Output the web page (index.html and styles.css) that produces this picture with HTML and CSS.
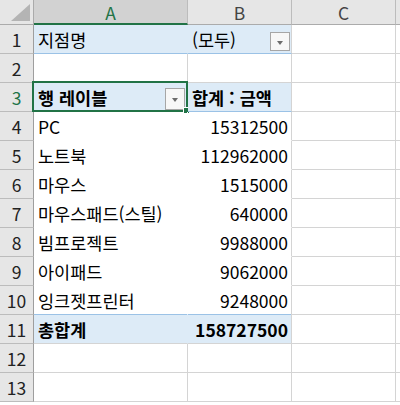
FILE: index.html
```html
<!DOCTYPE html>
<html lang="ko">
<head>
<meta charset="utf-8">
<link rel="stylesheet" href="styles.css">
</head>
<body>
<div class="sheet">
  <div class="hdr corner"><span class="tri"></span></div>
  <div class="hdr col sel">A</div>
  <div class="hdr col">B</div>
  <div class="hdr col">C</div>
  <div class="hdr col last"></div>

  <div class="hdr row">1</div>
  <div class="cell piv filter">지점명</div>
  <div class="cell piv filter b">(모두)<span class="dd"></span></div>
  <div class="cell"></div>
  <div class="cell"></div>

  <div class="hdr row">2</div>
  <div class="cell"></div>
  <div class="cell"></div>
  <div class="cell"></div>
  <div class="cell"></div>

  <div class="hdr row rsel">3</div>
  <div class="cell piv head bold active">행 레이블<span class="dd"></span><span class="frame"><span class="handle"></span></span></div>
  <div class="cell piv head bold b">합계 : 금액</div>
  <div class="cell"></div>
  <div class="cell"></div>

  <div class="hdr row">4</div>
  <div class="cell data">PC</div>
  <div class="cell data num">15312500</div>
  <div class="cell"></div>
  <div class="cell"></div>

  <div class="hdr row">5</div>
  <div class="cell data">노트북</div>
  <div class="cell data num">112962000</div>
  <div class="cell"></div>
  <div class="cell"></div>

  <div class="hdr row">6</div>
  <div class="cell data">마우스</div>
  <div class="cell data num">1515000</div>
  <div class="cell"></div>
  <div class="cell"></div>

  <div class="hdr row">7</div>
  <div class="cell data">마우스패드(스틸)</div>
  <div class="cell data num">640000</div>
  <div class="cell"></div>
  <div class="cell"></div>

  <div class="hdr row">8</div>
  <div class="cell data">빔프로젝트</div>
  <div class="cell data num">9988000</div>
  <div class="cell"></div>
  <div class="cell"></div>

  <div class="hdr row">9</div>
  <div class="cell data">아이패드</div>
  <div class="cell data num">9062000</div>
  <div class="cell"></div>
  <div class="cell"></div>

  <div class="hdr row">10</div>
  <div class="cell data">잉크젯프린터</div>
  <div class="cell data num">9248000</div>
  <div class="cell"></div>
  <div class="cell"></div>

  <div class="hdr row">11</div>
  <div class="cell piv total bold">총합계</div>
  <div class="cell piv total bold num">158727500</div>
  <div class="cell"></div>
  <div class="cell"></div>

  <div class="hdr row">12</div>
  <div class="cell"></div>
  <div class="cell"></div>
  <div class="cell"></div>
  <div class="cell"></div>

  <div class="hdr row">13</div>
  <div class="cell"></div>
  <div class="cell"></div>
  <div class="cell"></div>
  <div class="cell"></div>
</div>
</body>
</html>
```

FILE: styles.css
```css
html, body {
  margin: 0;
  padding: 0;
  background: #ffffff;
}
.sheet {
  display: grid;
  grid-template-columns: 34px 154px 104px 104px 20px;
  grid-template-rows: 25px repeat(14, 29px);
  width: 400px;
  height: 405px;
  overflow: hidden;
  font-family: "Noto Sans CJK KR", "Noto Sans", sans-serif;
  font-size: 17.5px;
  color: #000;
}
.sheet > div {
  box-sizing: border-box;
  position: relative;
  white-space: nowrap;
}
.hdr {
  background: #e6e6e6;
  color: #444;
  display: flex;
  align-items: center;
  justify-content: center;
}
.corner {
  border-right: 1px solid #ababab;
  border-bottom: 1px solid #ababab;
}
.tri {
  position: absolute;
  right: 3px;
  bottom: 3px;
  width: 0;
  height: 0;
  border-left: 19px solid transparent;
  border-bottom: 17px solid #b4b4b4;
}
.col {
  border-right: 1px solid #bcbcbc;
  border-bottom: 1px solid #ababab;
  padding-top: 1px;
}
.col.sel {
  background: #d2d2d2;
  color: #217346;
  border-bottom: 2px solid #217346;
  padding-top: 2px;
}
.col.last {
  border-right: none;
}
.row {
  border-right: 1px solid #9e9e9e;
  border-bottom: 1px solid #bcbcbc;
  color: #222;
  padding-top: 1px;
}
.row.rsel {
  color: #217346;
}
.cell {
  border-right: 1px solid #d4d4d4;
  border-bottom: 1px solid #d4d4d4;
  display: flex;
  align-items: center;
  padding: 1px 4px 0 4px;
}
.piv {
  background: #ddebf7;
  border-right-color: #ddebf7;
}
.piv.b {
  border-right-color: #d4d4d4;
}
.filter {
  border-bottom-color: #9bc2e6;
}
.head {
  border-bottom-color: #9bc2e6;
}
.data {
  border-right-color: #ffffff;
  border-bottom-color: #ffffff;
}
.data.num {
  border-right-color: #d4d4d4;
}
.total {
  border-bottom-color: #d4d4d4;
  box-shadow: inset 0 1px 0 #9bc2e6;
  margin-top: -1px;
  padding-top: 2px;
}
.total.num {
  border-right-color: #d4d4d4;
}
.bold {
  font-weight: bold;
}
.num {
  justify-content: flex-end;
  padding-right: 3px;
}
.dd {
  position: absolute;
  right: 1px;
  top: 7px;
  width: 20px;
  height: 19px;
  box-sizing: border-box;
  border: 1px solid #a6a6a6;
  background: #f7f7f7;
}
.dd::after {
  content: "";
  position: absolute;
  left: 6px;
  top: 8px;
  border-left: 3.5px solid transparent;
  border-right: 3.5px solid transparent;
  border-top: 4px solid #6b6b6b;
}
.active .dd {
  right: 2px;
  top: 5px;
  height: 22px;
}
.active .dd::after {
  top: 9px;
}
.frame {
  position: absolute;
  left: -2px;
  top: -2px;
  right: -1px;
  bottom: -1px;
  border: 2px solid #217346;
  pointer-events: none;
}
.handle {
  position: absolute;
  right: -4px;
  bottom: -4px;
  width: 5px;
  height: 5px;
  background: #217346;
  border: 1px solid #ffffff;
}
```
